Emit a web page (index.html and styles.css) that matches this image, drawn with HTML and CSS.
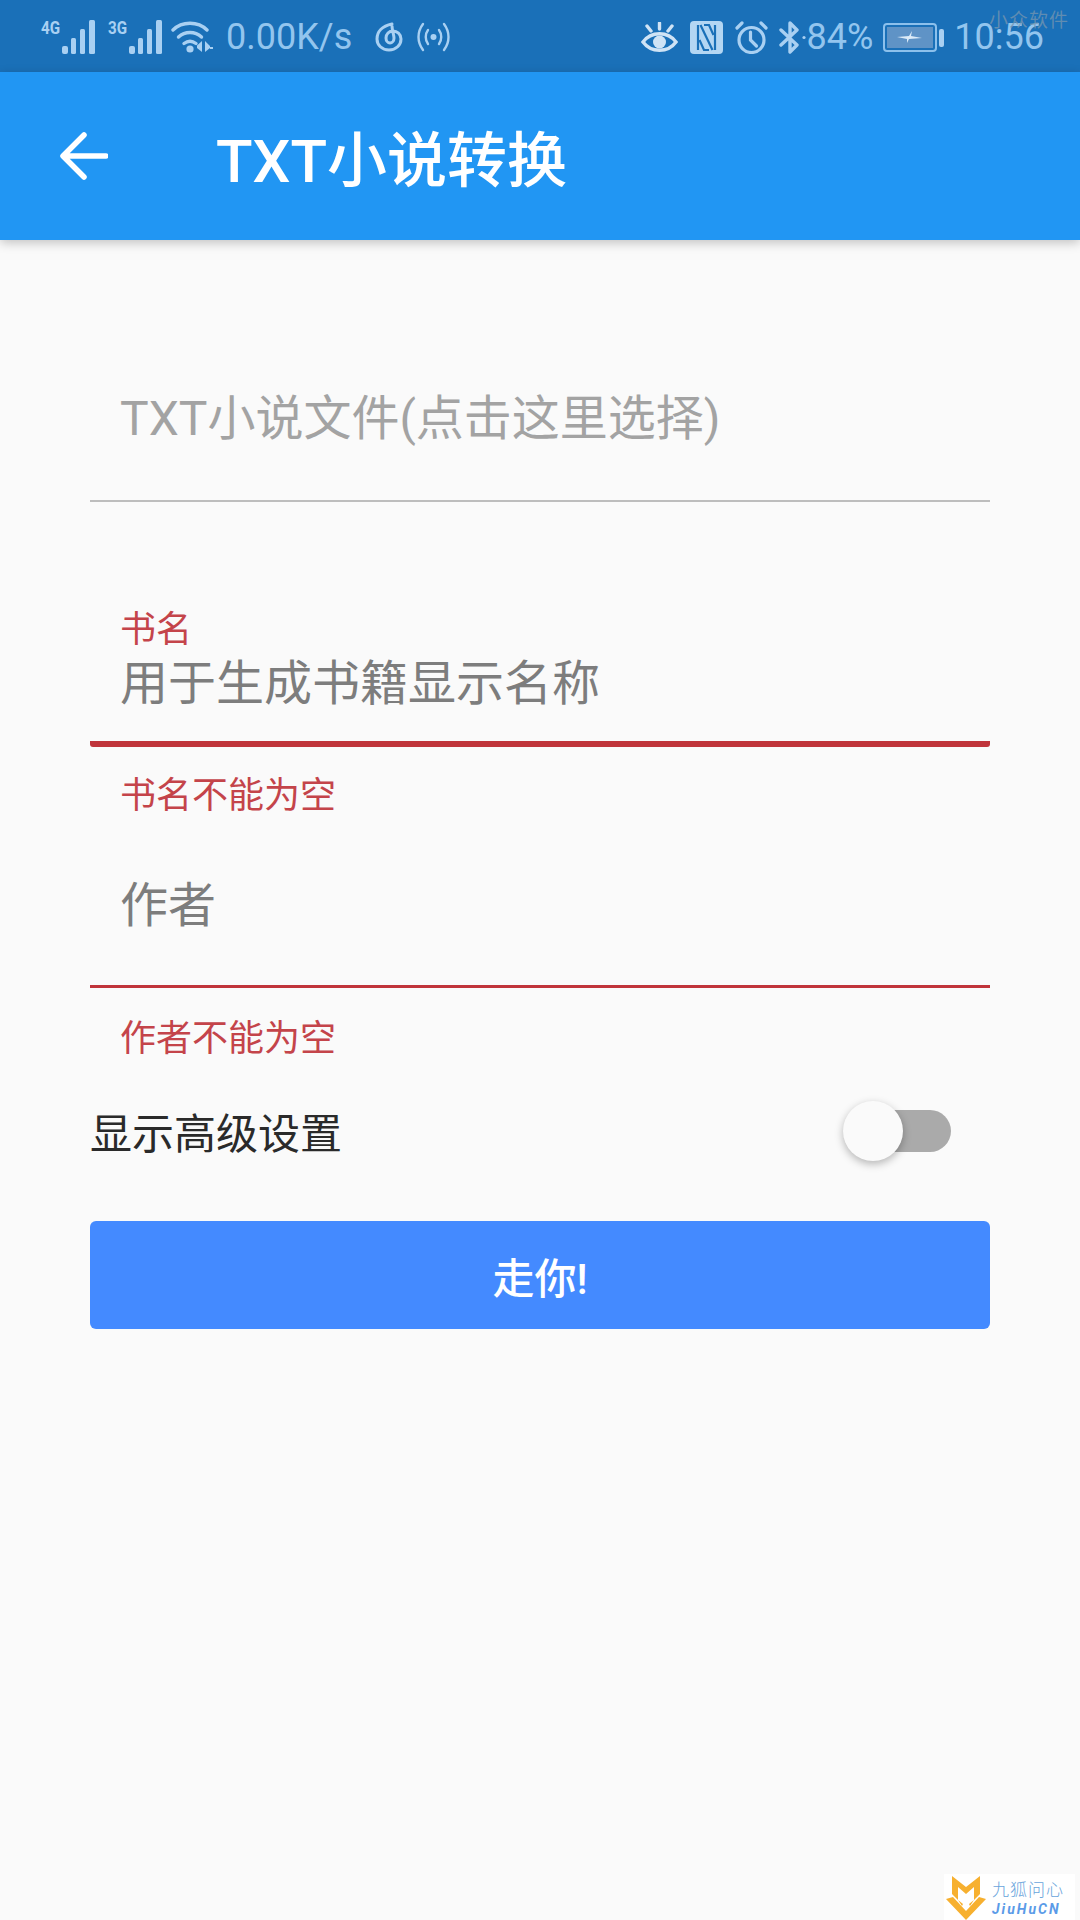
FILE: index.html
```html
<!DOCTYPE html>
<html lang="zh-CN">
<head>
<meta charset="utf-8">
<title>TXT小说转换</title>
<link rel="stylesheet" href="styles.css">
</head>
<body>
<div class="screen">
  <header class="status">
    <div class="status-group">
      <div class="net"><span class="net-label">4G</span>
        <svg class="bars" viewBox="0 0 34 34"><g fill="#a9d0f2"><rect x="0" y="26" width="6" height="8" rx="2"/><rect x="9" y="18" width="5" height="16" rx="1.5"/><rect x="18" y="9" width="5" height="25" rx="1.5"/><rect x="27" y="0" width="6" height="34" rx="1.5"/></g></svg>
      </div>
      <div class="net net-second"><span class="net-label">3G</span>
        <svg class="bars" viewBox="0 0 34 34"><g fill="#a9d0f2"><rect x="0" y="26" width="6" height="8" rx="2"/><rect x="9" y="18" width="5" height="16" rx="1.5"/><rect x="18" y="9" width="5" height="25" rx="1.5"/><rect x="27" y="0" width="6" height="34" rx="1.5"/></g></svg>
      </div>
      <svg class="wifi" viewBox="0 0 42 32"><g fill="none" stroke="#a9d0f2" stroke-width="3.4" stroke-linecap="round"><path d="M2 9C11 0 27 0 36 9"/><path d="M7.500 16C14 10 24 10 30.500 16"/><path d="M13 22.500C17 19.500 21 19.500 25 22.500"/></g><circle cx="19" cy="28" r="3.6" fill="#a9d0f2"/><path d="M31 20v11l-5-4v-2.500l5-4.500zM34 20l5 5v2l-5 4z" fill="#a9d0f2"/><rect x="39" y="26" width="3" height="2" fill="#a9d0f2"/></svg>
      <span class="speed">0.00K/s</span>
      <svg class="netease" viewBox="0 0 28 30"><g fill="none" stroke="#a9d0f2" stroke-width="3" stroke-linecap="round"><path d="M17 2C7 4 2 10 2 17c0 6 5 11 12 11s12-5 12-11c0-5-4-8-8-8-4 0-7 3-7 7 0 3 2 5 4 5s4-2 4-5c0-3-2-8-2-12"/></g></svg>
      <svg class="hotspot" viewBox="0 0 33 30"><g fill="none" stroke="#a9d0f2" stroke-width="2.4" stroke-linecap="round"><path d="M6 2C0 10 0 20 6 28"/><path d="M27 2c6 8 6 18 0 26"/><path d="M11 8c-3 4-3 10 0 14"/><path d="M22 8c3 4 3 10 0 14"/></g><circle cx="16.500" cy="15" r="3" fill="#a9d0f2"/></svg>
    </div>
    <div class="status-group">
      <svg class="eye" viewBox="0 0 37 31"><g fill="none" stroke="#cfe3f5" stroke-width="3.4" stroke-linecap="round"><path d="M2 20C10 9 27 9 35 20C27 31 10 31 2 20Z"/><path d="M18.500 1v6M6 4l4 5M31 4l-4 5"/></g><circle cx="18.500" cy="20" r="6.500" fill="#cfe3f5"/></svg>
      <svg class="nfc" viewBox="0 0 33 33"><rect width="33" height="33" rx="4" fill="#b3d6f3"/><g fill="none" stroke="#1a70b8" stroke-width="2.200"><path d="M8 4v25"/><path d="M25 4v25"/><path d="M10.500 4L22.500 29"/><path d="M14 4h5l4.500 10"/><path d="M19 29h-5L9.500 19"/></g></svg>
      <svg class="alarm" viewBox="0 0 33 33"><g fill="none" stroke="#a9d0f2" stroke-width="3.200" stroke-linecap="round"><circle cx="16.500" cy="19" r="12.500"/><path d="M15.500 11v8l6 6"/><path d="M2 7l5-5M31 7l-5-5"/></g></svg>
      <svg class="bt" viewBox="0 0 28 33"><g fill="none" stroke="#a9d0f2" stroke-width="3.400" stroke-linejoin="round" stroke-linecap="round"><path d="M3 9l16 15-7 7V2l7 7L3 24"/></g><circle cx="26" cy="16.500" r="1.600" fill="#a9d0f2"/></svg>
      <span class="percent">84%</span>
      <svg class="batt-icon" viewBox="0 0 61 29"><rect x="1" y="1" width="52" height="27" rx="3" fill="none" stroke="#8cc0ec" stroke-width="2"/><rect x="4" y="4" width="46" height="21" fill="#5f93c6"/><path d="M14 14l12-1 3-5-1 5 11 2-13 1-2 4 0-4z" fill="#dcebf8"/><rect x="56" y="6" width="5" height="18" rx="2" fill="#a9d0f2"/></svg>
      <span class="clock">10:56</span>
    </div>
    <span class="watermark">小众软件</span>
  </header>

  <div class="appbar">
    <svg class="back" viewBox="0 0 48 48"><path d="M46 24H4M24 3L3 24l21 21" fill="none" stroke="#fff" stroke-width="5.500" stroke-linecap="round" stroke-linejoin="round"/></svg>
    <h1 class="title">TXT小说转换</h1>
  </div>

  <main class="form">
    <div class="field field-file">
      <div class="input input-hint">TXT小说文件(点击这里选择)</div>
    </div>

    <div class="field field-name">
      <div class="label">书名</div>
      <div class="input">用于生成书籍显示名称</div>
    </div>
    <div class="error error-name">书名不能为空</div>

    <div class="field field-author">
      <div class="input">作者</div>
    </div>
    <div class="error error-author">作者不能为空</div>

    <div class="switch-row">
      <span class="switch-label">显示高级设置</span>
      <div class="switch"><span class="track"></span><span class="thumb"></span></div>
    </div>

    <button class="submit" type="button">走你!</button>
  </main>

  <div class="logo">
    <svg class="fox" viewBox="0 0 40 46"><g fill="#f7b02f"><path d="M6 2l14 11L34 2v18l-6 6V13l-8 7-8-7v13l-6-6z"/><path d="M0 25l7-2 13 14 13-14 7 2-20 21z"/><path d="M12 26l5 4-1 2zM28 26l-5 4 1 2z"/></g></svg>
    <div class="logo-text">
      <span class="logo-cn">九狐问心</span>
      <span class="logo-en">JiuHuCN</span>
    </div>
  </div>
</div>
</body>
</html>
```

FILE: styles.css
```css
* { box-sizing: border-box; }
html, body { margin: 0; padding: 0; }
body {
  width: 1080px;
  height: 1920px;
  overflow: hidden;
  font-family: Roboto, "Noto Sans CJK SC", sans-serif;
  background: #fafafa;
}
.screen { position: relative; width: 1080px; height: 1920px; background: #fafafa; overflow: hidden; }

.status {
  position: relative;
  height: 72px;
  background: #1a70b8;
  display: flex;
  justify-content: space-between;
  align-items: center;
  padding: 2px 36px 0 41px;
  color: #93c5ee;
}
.status-group { display: flex; align-items: center; }
.net { position: relative; display: flex; align-items: flex-end; width: 55px; height: 34px; justify-content: flex-end; }
.net-second { margin-left: 12px; }
.net-label {
  position: absolute;
  left: 0;
  top: -2px;
  font: 700 19px/20px Roboto, sans-serif;
  color: #a9d0f2;
  transform: scaleX(.8);
  transform-origin: left center;
}
.bars { width: 34px; height: 34px; display: block; }
.wifi { width: 42px; height: 32px; margin-left: 8px; }
.speed { font-size: 36px; line-height: 44px; margin-left: 13px; }
.netease { width: 28px; height: 30px; margin-left: 23px; }
.hotspot { width: 33px; height: 30px; margin-left: 14px; }
.eye { width: 37px; height: 31px; }
.nfc { width: 33px; height: 33px; margin-left: 12px; }
.alarm { width: 33px; height: 33px; margin-left: 12px; }
.bt { width: 28px; height: 33px; margin-left: 10px; }
.percent { font-size: 36px; line-height: 44px; margin-left: 1px; }
.batt-icon { width: 61px; height: 29px; display: block; margin-left: 10px; }
.clock { font-size: 36px; line-height: 44px; margin-left: 10px; }
.watermark {
  position: absolute;
  right: 11px;
  top: 9px;
  font-size: 19px;
  line-height: 24px;
  letter-spacing: 1px;
  color: rgba(120, 150, 175, .75);
}

.appbar {
  position: relative;
  height: 168px;
  background: #2196f3;
  display: flex;
  align-items: center;
  padding-left: 60px;
  box-shadow: 0 3px 10px rgba(0, 0, 0, .22);
}
.back { width: 48px; height: 48px; }
.title {
  margin: 11px 0 0 108px;
  font-size: 60px;
  line-height: 80px;
  font-weight: 500;
  color: #fff;
}

.form { padding: 0 90px; display: flex; flex-direction: column; }
.field { display: flex; flex-direction: column; }
.input { font-size: 48px; line-height: 58px; padding-left: 30px; color: #7d7d7d; }
.input-hint { color: #a3a3a3; }
.label, .error { font-size: 36px; line-height: 44px; padding-left: 30px; color: #c4444a; }

.field-file { padding: 150px 0 52px; border-bottom: 2px solid #bdbdbd; }
.field-name { margin-top: 106px; padding-bottom: 28px; border-bottom: 6px solid #c0343a; border-radius: 0 0 3px 3px; }
.field-name .input { margin-top: 3px; }
.error-name { margin-top: 27px; }
.field-author { margin-top: 59px; padding-bottom: 50px; border-bottom: 3px solid #c0343a; }
.error-author { margin-top: 29px; }

.switch-row {
  margin-top: 37px;
  height: 70px;
  display: flex;
  align-items: center;
  justify-content: space-between;
}
.switch-label { font-size: 42px; line-height: 56px; color: #2a2a2a; margin-top: 4px; }
.switch { position: relative; width: 108px; height: 60px; margin-right: 39px; margin-bottom: 4px; }
.track {
  position: absolute;
  right: 0;
  top: 9px;
  width: 81px;
  height: 42px;
  border-radius: 21px;
  background: #aaaaaa;
}
.thumb {
  position: absolute;
  left: 0;
  top: 0;
  width: 60px;
  height: 60px;
  border-radius: 50%;
  background: #fafafa;
  box-shadow: 0 3px 8px rgba(0, 0, 0, .28);
}

.submit {
  margin-top: 53px;
  height: 108px;
  width: 900px;
  border: 0;
  border-radius: 6px;
  background: #448aff;
  color: #fff;
  font-family: inherit;
  font-size: 42px;
  font-weight: 500;
  padding: 0;
}

.logo {
  position: absolute;
  right: 5px;
  bottom: 0;
  width: 131px;
  height: 46px;
  background: #fff;
  display: flex;
  align-items: center;
  padding-left: 2px;
}
.fox { width: 40px; height: 46px; }
.logo-text { display: flex; flex-direction: column; margin-left: 6px; }
.logo-cn { font-size: 17px; line-height: 23px; letter-spacing: 1px; color: #6aa5dc; font-weight: 300; }
.logo-en { font: italic 700 14px/14px Roboto, sans-serif; letter-spacing: 2px; color: #5b9be8; }
```
